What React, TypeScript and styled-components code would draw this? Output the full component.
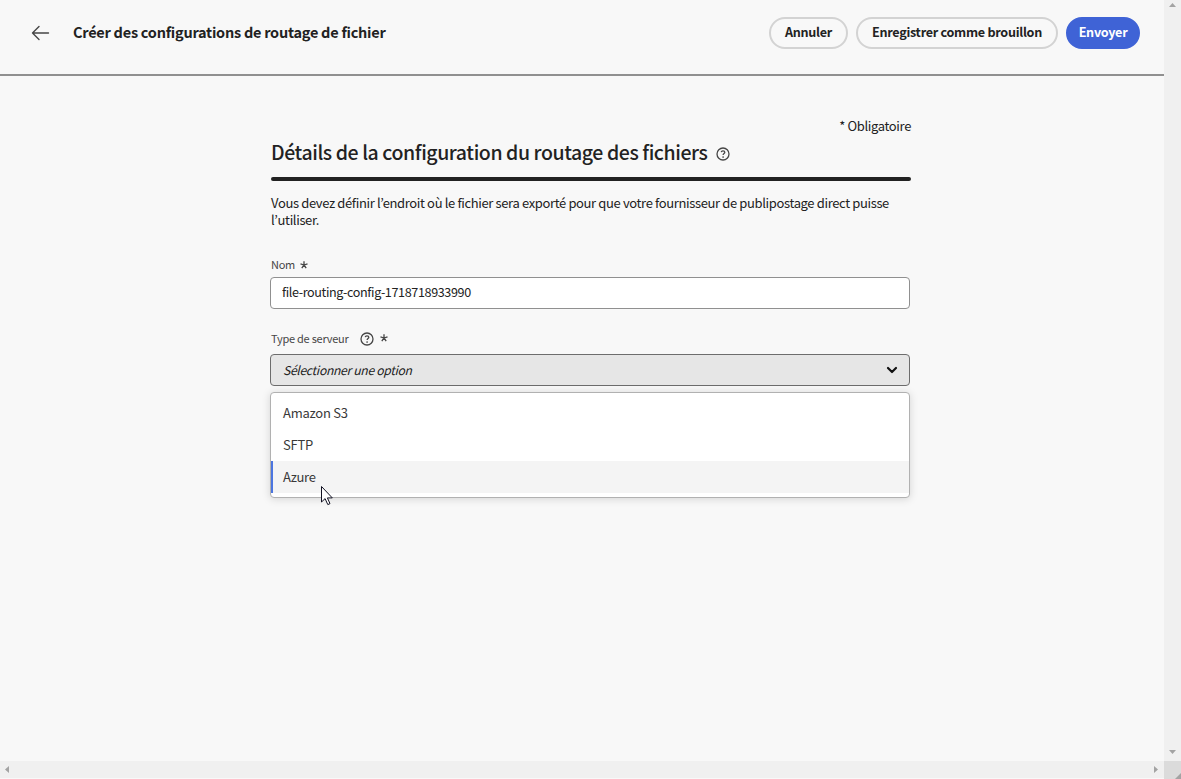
import React from 'react';
import styled, { createGlobalStyle, css } from 'styled-components';

const GlobalStyle = createGlobalStyle`
  *, *::before, *::after { box-sizing: border-box; }
  body {
    margin: 0;
    overflow: hidden;
    background: #f8f8f8;
    color: #222222;
    font-family: "Noto Sans CJK JP", "Noto Sans", sans-serif;
    font-size: 13px;
  }
`;

const Window = styled.div`
  display: grid;
  grid-template-columns: 1fr 17px;
  grid-template-rows: 1fr 18px;
  width: 1181px;
  height: 779px;
`;

const Page = styled.div`
  display: flex;
  flex-direction: column;
  min-width: 0;
`;

const Header = styled.header`
  display: flex;
  align-items: flex-start;
  height: 76px;
  padding: 17px 24px 0 31px;
  border-bottom: 2px solid #909090;
`;

const BackButton = styled.button`
  display: flex;
  align-items: center;
  width: 42px;
  height: 32px;
  padding: 0;
  border: 0;
  background: none;
`;

const PageTitle = styled.h1`
  flex: 1;
  margin: 0;
  font-size: 14.5px;
  font-weight: 700;
  line-height: 30px;
  letter-spacing: -0.25px;
  white-space: nowrap;
`;

const Actions = styled.div`
  display: flex;
  gap: 8px;
`;

const Button = styled.button<{ $width: number; $primary?: boolean }>`
  width: ${(p) => p.$width}px;
  height: 32px;
  padding: 0 0 2px;
  border: 2px solid #d3d3d3;
  border-radius: 16px;
  background: transparent;
  color: #222222;
  font-family: inherit;
  font-size: 12.6px;
  font-weight: 700;
  line-height: 20px;
  letter-spacing: -0.28px;
  white-space: nowrap;
  ${(p) =>
    p.$primary &&
    css`
      border-color: #3f63d6;
      background: #3f63d6;
      color: #ffffff;
    `}
`;

const Form = styled.main`
  display: flex;
  flex-direction: column;
  width: 641px;
  margin: 41px 0 0 270px;
`;

const RequiredNote = styled.div`
  align-self: flex-end;
  line-height: 18px;
  letter-spacing: -0.35px;
`;

const SectionHeading = styled.div`
  display: flex;
  align-items: center;
  gap: 9px;
  height: 42px;
  margin-left: 1px;
  padding-bottom: 4px;
`;

const SectionTitle = styled.h2`
  margin: 0;
  padding-bottom: 4px;
  font-size: 19.5px;
  font-weight: 500;
  line-height: 28px;
  letter-spacing: -0.42px;
  white-space: nowrap;
`;

const SectionRule = styled.div`
  height: 4px;
  margin-left: 1px;
  border-radius: 2px;
  background: #222222;
`;

const Description = styled.p`
  margin: 13px 0 0 1px;
  line-height: 17px;
  letter-spacing: -0.365px;
  white-space: nowrap;
`;

const FieldLabel = styled.label<{ $top: number; $gap: number }>`
  display: flex;
  align-items: center;
  height: 16px;
  margin: ${(p) => p.$top}px 0 0 1px;
  gap: ${(p) => p.$gap}px;
  color: #464646;
  font-size: 11px;
  line-height: 16px;
  letter-spacing: -0.25px;
`;

const LabelText = styled.span`
  padding-bottom: 2px;
`;

const LabelIcons = styled.span`
  display: flex;
  align-items: flex-start;
  gap: 6px;

  svg + svg {
    margin-top: 2px;
  }
`;

const TextInput = styled.input`
  width: 640px;
  height: 32px;
  margin-top: 4px;
  padding: 0 12px 3px 11px;
  border: 1px solid #909090;
  border-radius: 4px;
  background: #ffffff;
  color: #222222;
  font: inherit;
  font-size: 12.6px;
  letter-spacing: -0.38px;
`;

const Picker = styled.div`
  display: flex;
  align-items: center;
  justify-content: space-between;
  width: 640px;
  height: 32px;
  margin-top: 7px;
  padding: 0 11px 0 12px;
  border: 1px solid #6d6d6d;
  border-radius: 4px;
  background: #e6e6e6;
`;

const Placeholder = styled.span`
  font-size: 12.2px;
  font-style: italic;
  line-height: 18px;
  letter-spacing: -0.34px;
`;

const Menu = styled.ul`
  width: 640px;
  height: 106px;
  margin: 6px 0 0;
  padding: 4px 0;
  border: 1px solid #b1b1b1;
  border-radius: 4px;
  background: #ffffff;
  box-shadow: 0 1px 8px rgba(0, 0, 0, 0.15);
  list-style: none;
`;

const Option = styled.li<{ $active?: boolean }>`
  height: 32px;
  padding-left: 10px;
  border-left: 2px solid ${(p) => (p.$active ? '#4b75e0' : 'transparent')};
  background: ${(p) => (p.$active ? '#f4f4f4' : 'transparent')};
  color: #393939;
  line-height: 32px;
  letter-spacing: -0.25px;
`;

const Cursor = styled.svg`
  position: absolute;
  left: 320px;
  top: 485px;
`;

const VerticalBar = styled.div`
  display: flex;
  flex-direction: column;
  align-items: center;
  justify-content: space-between;
  padding: 3px 0 7px;
  background: #f0f0f0;
`;

const HorizontalBar = styled.div`
  display: flex;
  align-items: center;
  justify-content: space-between;
  height: 17px;
  padding: 0 6px 0 5px;
  background: #f0f0f0;
`;

const Corner = styled.div`
  display: flex;
  align-items: flex-end;
  justify-content: flex-end;
  height: 18px;
  background: #dbdbdb;
`;

const HelpIcon = () => (
  <svg width="14" height="14" viewBox="0 0 14 14" fill="none" stroke="#464646">
    <circle cx="7" cy="7" r="6" strokeWidth="1.3" />
    <path d="M5.2 5.2C5.4 4.2 6.1 3.8 7 3.8c1 0 1.8.5 1.8 1.5C8.8 6.5 7.2 6.6 7.1 8" strokeWidth="1.3" />
    <circle cx="7.1" cy="10" r=".85" fill="#464646" stroke="none" />
  </svg>
);

const Asterisk = () => (
  <svg width="8" height="8" viewBox="0 0 8 8" fill="none" stroke="#464646" strokeWidth="1.3">
    <path d="M4 4V.3M4 4 .5 2.9M4 4l3.5-1.1M4 4 1.8 7.1M4 4l2.2 3.1" />
  </svg>
);

const ARROWS = {
  up: 'M0 4 3.5 0 7 4z',
  down: 'M0 0 3.5 4 7 0z',
  left: 'M4 0 0 3.5 4 7z',
  right: 'M0 0 4 3.5 0 7z',
};

const ScrollArrow = ({ direction }: { direction: keyof typeof ARROWS }) => {
  const vertical = direction === 'up' || direction === 'down';
  return (
    <svg width={vertical ? 7 : 4} height={vertical ? 4 : 7} fill="#a3a3a3">
      <path d={ARROWS[direction]} />
    </svg>
  );
};

export default function App() {
  return (
    <>
      <GlobalStyle />
      <Window>
        <Page>
          <Header>
            <BackButton aria-label="Retour">
              <svg width="19" height="16" viewBox="0 0 19 16" fill="none" stroke="#464646" strokeWidth="1.4" strokeLinecap="round" strokeLinejoin="round">
                <path d="M17.5 8H1.5M8 1.5 1.5 8 8 14.5" />
              </svg>
            </BackButton>
            <PageTitle>Créer des configurations de routage de fichier</PageTitle>
            <Actions>
              <Button $width={79}>Annuler</Button>
              <Button $width={202}>Enregistrer comme brouillon</Button>
              <Button $width={74} $primary>Envoyer</Button>
            </Actions>
          </Header>
          <Form>
            <RequiredNote>* Obligatoire</RequiredNote>
            <SectionHeading>
              <SectionTitle>Détails de la configuration du routage des fichiers</SectionTitle>
              <HelpIcon />
            </SectionHeading>
            <SectionRule />
            <Description>
              Vous devez définir l’endroit où le fichier sera exporté pour que votre fournisseur de publipostage direct puisse
              <br />
              l’utiliser.
            </Description>
            <FieldLabel $top={29} $gap={5}>
              <LabelText>Nom</LabelText>
              <Asterisk />
            </FieldLabel>
            <TextInput defaultValue="file-routing-config-1718718933990" />
            <FieldLabel $top={22} $gap={12}>
              <LabelText>Type de serveur</LabelText>
              <LabelIcons>
                <HelpIcon />
                <Asterisk />
              </LabelIcons>
            </FieldLabel>
            <Picker>
              <Placeholder>Sélectionner une option</Placeholder>
              <svg width="12" height="8" viewBox="0 0 12 8" fill="none" stroke="#111111" strokeWidth="2.2" strokeLinecap="round" strokeLinejoin="round">
                <path d="M2 2l4 4 4-4" />
              </svg>
            </Picker>
            <Menu>
              <Option>Amazon S3</Option>
              <Option>SFTP</Option>
              <Option $active>Azure</Option>
            </Menu>
          </Form>
        </Page>
        <VerticalBar>
          <ScrollArrow direction="up" />
          <ScrollArrow direction="down" />
        </VerticalBar>
        <HorizontalBar>
          <ScrollArrow direction="left" />
          <ScrollArrow direction="right" />
        </HorizontalBar>
        <Corner>
          <svg width="6" height="6" fill="#a3a3a3">
            <path d="M6 0v6H0z" />
          </svg>
        </Corner>
      </Window>
      <Cursor width="13" height="21" viewBox="0 0 13 21" fill="#ffffff" stroke="#111122" strokeWidth="1">
        <path d="M1.5 1.5v15.5l3.6-3.4 2.7 6 2.2-1-2.6-5.7h4.9z" />
      </Cursor>
    </>
  );
}
